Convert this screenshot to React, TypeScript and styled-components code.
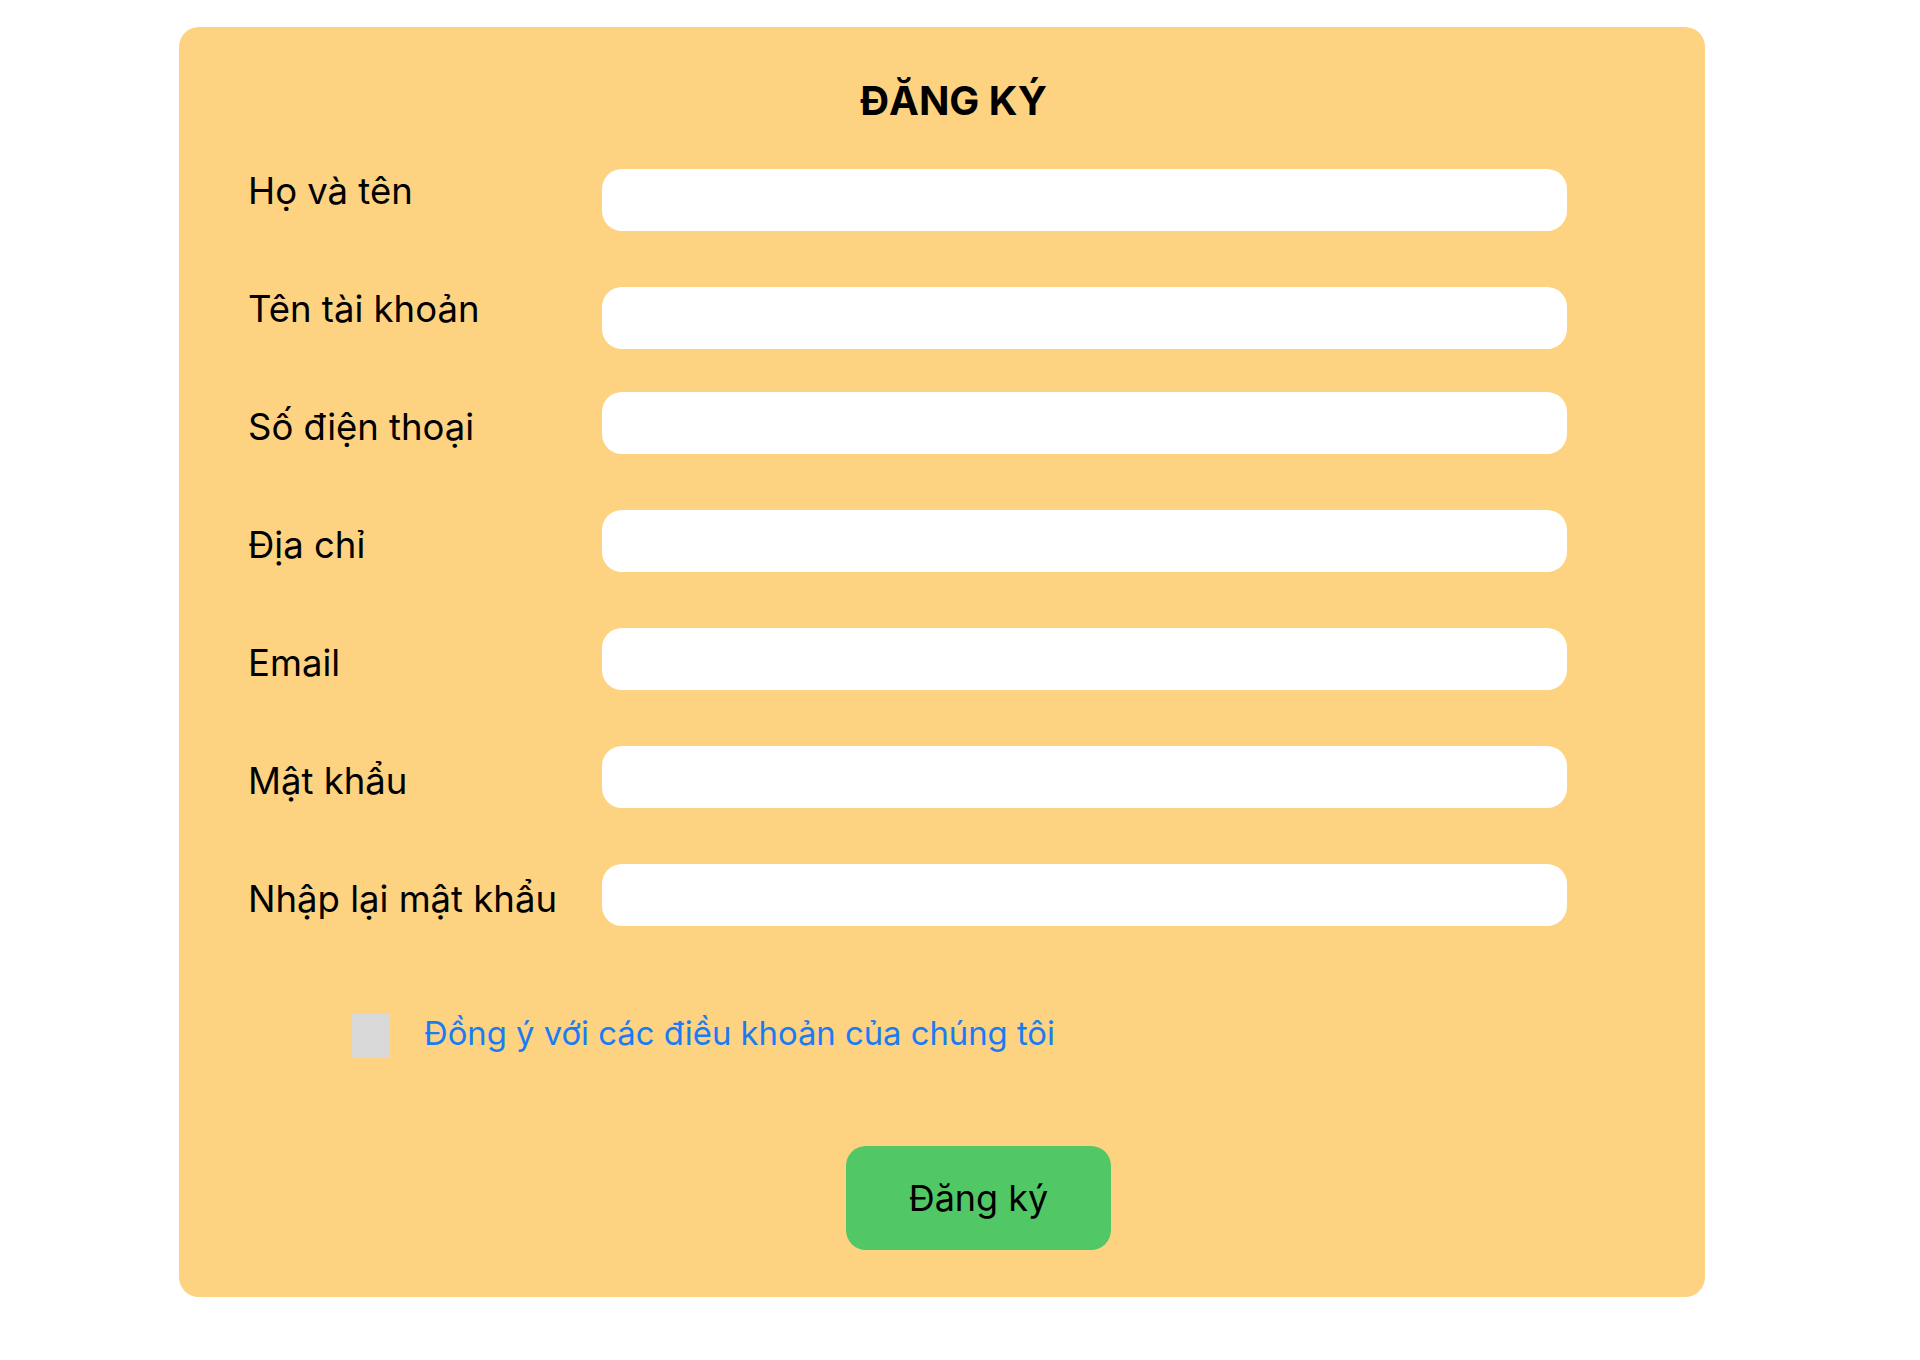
import React from "react";
import styled, { createGlobalStyle } from "styled-components";

const GlobalStyle = createGlobalStyle`
  html, body {
    margin: 0;
    padding: 0;
    background: #ffffff;
    font-family: Inter, "Noto Sans", "Liberation Sans", sans-serif;
  }
  * { box-sizing: border-box; }
`;

const Page = styled.div`
  padding: 27px 0 40px 179px;
`;

const Card = styled.form`
  width: 1526px;
  background: #fdd280;
  border-radius: 20px;
  padding: 51px 138px 47px 69px;
  display: flex;
  flex-direction: column;
  & > * { flex-shrink: 0; }
`;

const Title = styled.h2`
  margin: 0 0 45px 0;
  padding-left: 92px;
  text-align: center;
  font-size: 40px;
  font-weight: 700;
  line-height: 46px;
  color: #000;
`;

const Fields = styled.div`
  display: flex;
  flex-direction: column;
  gap: 56px;
`;

const Row = styled.div`
  display: flex;
  align-items: flex-start;
  height: 62px;
`;

const Label = styled.label`
  width: 354px;
  flex: 0 0 354px;
  font-size: 36.5px;
  color: #000;
  line-height: normal;
`;

const Input = styled.input<{ $shift?: number }>`
  width: 965px;
  height: 62px;
  flex: 0 0 965px;
  border: none;
  outline: none;
  border-radius: 20px;
  background: #ffffff;
  margin-top: ${(p) => (p.$shift ? `${p.$shift}px` : "0")};
  padding: 0 20px;
  font-size: 28px;
  font-family: inherit;
`;

const AgreeRow = styled.div`
  display: flex;
  align-items: center;
  gap: 34px;
  height: 44px;
  margin: 75px 0 0 104px;
`;

const Check = styled.span`
  display: block;
  width: 38px;
  height: 44px;
  background: #d9d9d9;
`;

const AgreeText = styled.a`
  font-size: 32.8px;
  color: #1a7cf5;
  text-decoration: none;
  margin-bottom: 7px;
`;

const SubmitButton = styled.button`
  margin: 88px 0 0 598px;
  width: 265px;
  height: 104px;
  border: none;
  border-radius: 20px;
  background: #52c766;
  color: #000;
  font-family: inherit;
  font-size: 36px;
  cursor: pointer;
  align-self: flex-start;
`;

const fields: { label: string; type: string; shift?: number }[] = [
  { label: "Họ và tên", type: "text" },
  { label: "Tên tài khoản", type: "text" },
  { label: "Số điện thoại", type: "tel", shift: -13 },
  { label: "Địa chỉ", type: "text", shift: -13 },
  { label: "Email", type: "email", shift: -13 },
  { label: "Mật khẩu", type: "password", shift: -13 },
  { label: "Nhập lại mật khẩu", type: "password", shift: -13 },
];

export default function App() {
  return (
    <>
      <GlobalStyle />
      <Page>
        <Card onSubmit={(e) => e.preventDefault()}>
          <Title>ĐĂNG KÝ</Title>
          <Fields>
            {fields.map((f) => (
              <Row key={f.label}>
                <Label>{f.label}</Label>
                <Input type={f.type} $shift={f.shift} />
              </Row>
            ))}
          </Fields>
          <AgreeRow>
            <Check />
            <AgreeText href="#">Đồng ý với các điều khoản của chúng tôi</AgreeText>
          </AgreeRow>
          <SubmitButton type="submit">Đăng ký</SubmitButton>
        </Card>
      </Page>
    </>
  );
}
